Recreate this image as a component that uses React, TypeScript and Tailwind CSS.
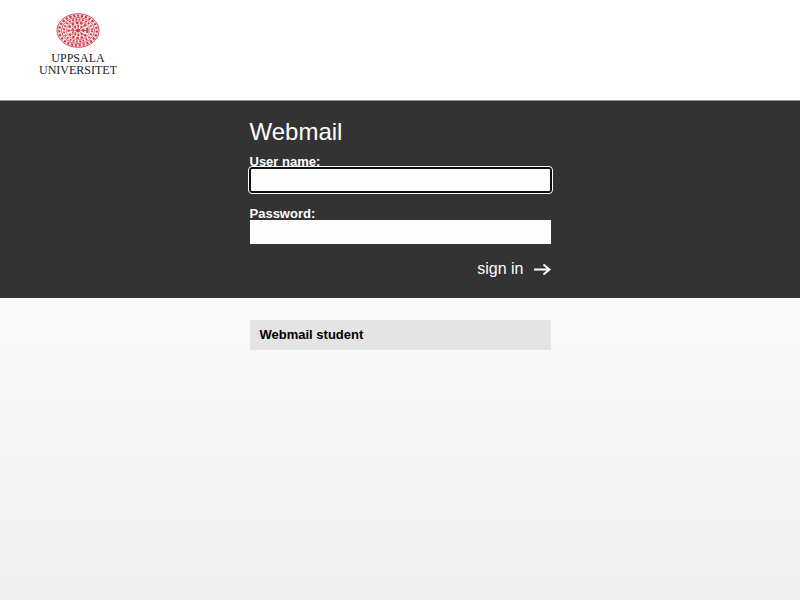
const rings = [
  { rx: 18.8, ry: 14.8, width: 2.2, dash: "2.2 1.7" },
  { rx: 14, ry: 11, width: 1.9, dash: "1.8 1.5" },
  { rx: 9.5, ry: 7.5, width: 2.2, dash: "2.4 1.8" },
  { rx: 5.5, ry: 4.5, width: 2.2, dash: "1.6 1.6" },
];

function Seal() {
  return (
    <svg className="h-[35px] w-[44px]" viewBox="0 0 44 35" fill="none" stroke="#cc3a48" aria-hidden="true">
      <ellipse cx="22" cy="17.5" rx="21" ry="16.8" fill="#fae6e8" strokeWidth="0.9" />
      {rings.map((r) => (
        <ellipse key={r.rx} cx="22" cy="17.5" rx={r.rx} ry={r.ry} strokeWidth={r.width} strokeDasharray={r.dash} />
      ))}
      <ellipse cx="22" cy="17.5" rx="16.5" ry="13" strokeWidth="0.8" />
      <ellipse cx="22" cy="17.5" rx="11.8" ry="9.3" strokeWidth="0.6" />
      <path d="M22 9v17M12 17.5h20M16 13l12 9M28 13l-12 9" strokeWidth="0.7" />
      <circle cx="22" cy="17.5" r="1.8" fill="#cc3a48" stroke="none" />
    </svg>
  );
}

export default function App() {
  return (
    <div className="flex min-h-screen flex-col bg-linear-to-b from-[#f9f9f9] from-50% to-[#f0f0f0] font-['Liberation_Sans',Arial,sans-serif] text-[13px]">
      <header className="flex h-[100px] bg-white px-[39px] pt-[13px]">
        <div className="flex h-fit flex-col items-center">
          <Seal />
          <div className="mt-1 text-center font-['Liberation_Serif',serif] text-xs leading-3 text-[#222]">
            <div>UPPSALA</div>
            <div>UNIVERSITET</div>
          </div>
        </div>
      </header>

      <main className="border-t border-[#8b8f8e] bg-[#333] pb-5 text-white">
        <form className="mx-auto w-[301px] pt-[18px]" onSubmit={(e) => e.preventDefault()}>
          <h1 className="text-2xl leading-[26px]">Webmail</h1>
          <label htmlFor="username" className="mt-[10px] block h-[13px] font-bold leading-[14px]">
            User name:
          </label>
          <input
            id="username"
            type="text"
            className="block h-6 w-full rounded-xs border border-[#101010] bg-[#fdfdfd] px-2 text-black outline-1 outline-offset-1 outline-white ring-1 ring-[#101010]"
          />
          <label htmlFor="password" className="mt-[15px] block h-[13px] font-bold leading-[14px]">
            Password:
          </label>
          <input id="password" type="password" className="block h-6 w-full bg-[#fdfdfd] px-2 text-black outline-none" />
          <div className="mt-4 flex justify-end">
            <button type="submit" className="flex items-center gap-[9px] text-base leading-[18px]">
              sign in
              <svg className="h-3 w-[18px]" viewBox="0 0 18 12" fill="none" stroke="white" strokeWidth="2" aria-hidden="true">
                <path d="M1 6.5h15M10.5 1.5l6 5-6 5" />
              </svg>
            </button>
          </div>
        </form>
      </main>

      <div className="mx-auto mt-[22px] w-[301px]">
        <a href="#student" className="block bg-[#e4e4e4] px-[10px] py-[6px] font-bold leading-[18px] text-black">
          Webmail student
        </a>
      </div>
    </div>
  );
}
